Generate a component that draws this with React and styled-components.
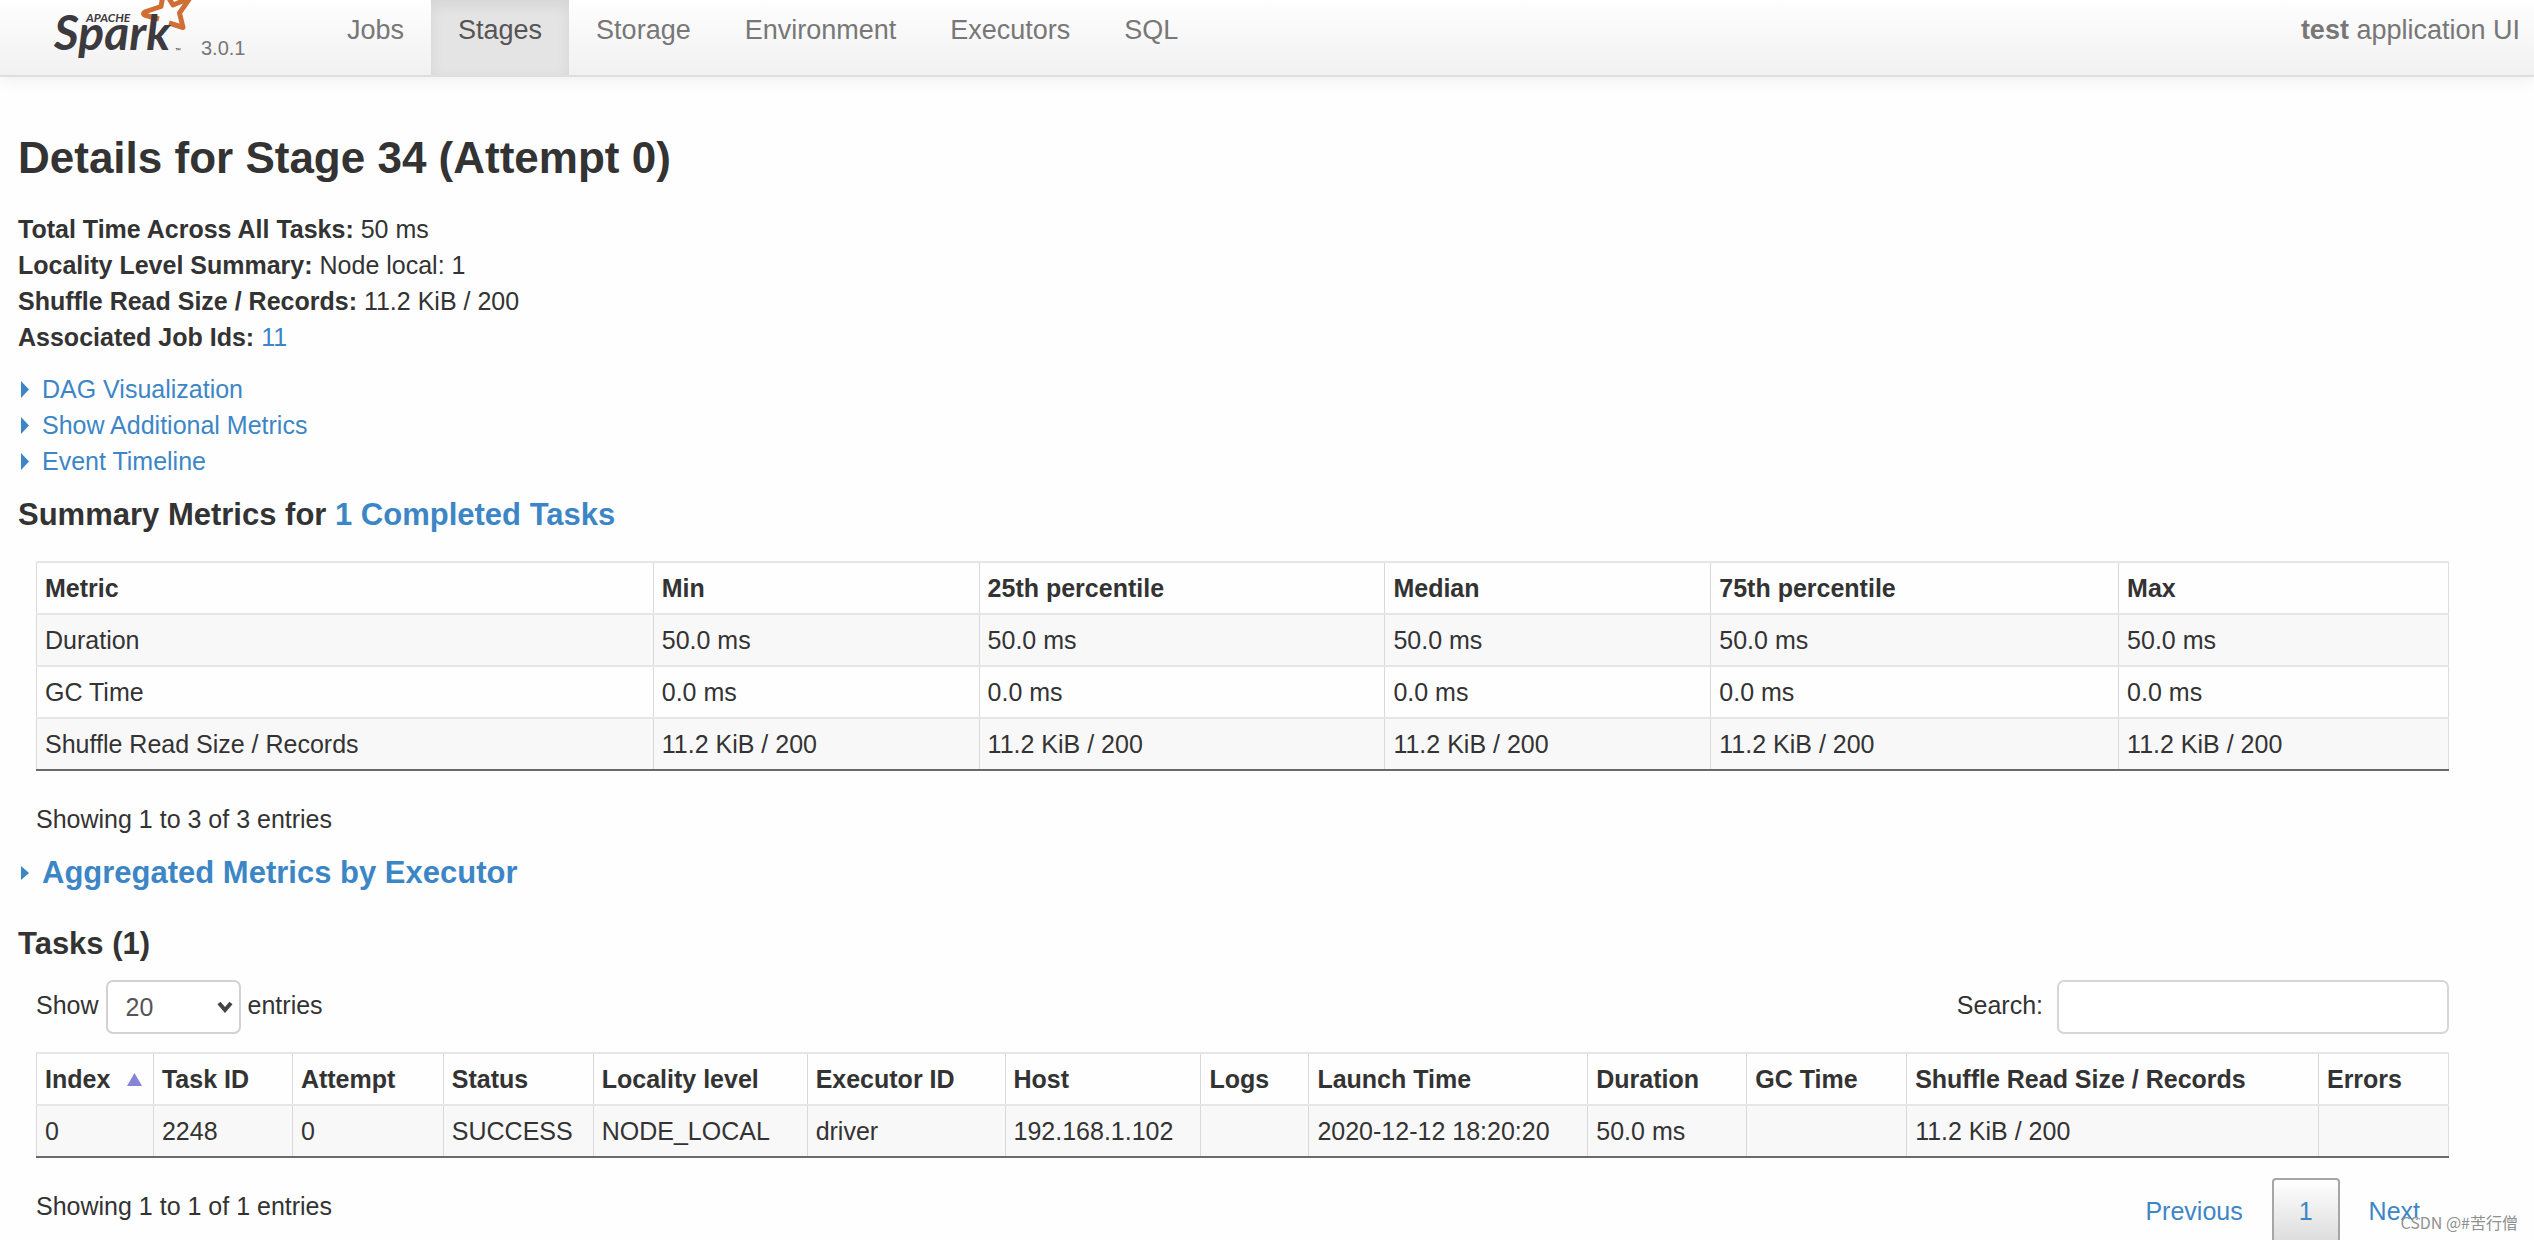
import React, { useState } from "react";
import styled, { createGlobalStyle } from "styled-components";

const GlobalStyle = createGlobalStyle`
    * {
        box-sizing: border-box;
    }

    body {
        margin: 0;
        background: #fefefe;
        color: #333;
        font-family: "Liberation Sans", Arial, sans-serif;
        font-size: 25px;
        line-height: 36px;
    }
`;

const Page = styled.div`
    position: relative;
    height: 100vh;
    overflow: hidden;
`;

/* navbar */

const Navbar = styled.header`
    display: flex;
    height: 77px;
    background: linear-gradient(#fefefe, #f1f1f1);
    border-bottom: 2px solid #dedede;
    box-shadow: 0 2px 18px rgba(0, 0, 0, 0.07);
`;

const Brand = styled.a`
    display: flex;
    align-items: flex-start;
    width: 320px;
    padding-left: 50px;
    color: #777;
    text-decoration: none;
`;

const LogoSvg = styled.svg`
    display: block;
    width: 145px;
    height: 64px;
`;

const Version = styled.span`
    margin: 30px 0 0 6px;
    font-size: 20px;
`;

const Nav = styled.nav`
    display: flex;
    flex: 1;
`;

const NavLink = styled.a`
    padding: 12px 27px;
    font-size: 27px;
    text-decoration: none;
    color: ${(props) => (props.$active ? "#555" : "#777")};
    background: ${(props) => (props.$active ? "#e4e4e4" : "transparent")};
    box-shadow: ${(props) => (props.$active ? "inset 0 5px 14px rgba(0, 0, 0, 0.07)" : "none")};
`;

const AppName = styled.p`
    margin: 0;
    padding: 12px 14px;
    font-size: 27px;
    color: #777;
`;

/* content */

const Content = styled.main`
    padding: 54px 18px 0;
`;

const Title = styled.h3`
    margin: 0 0 26px;
    font-size: 44px;
    line-height: 54px;
`;

const Heading = styled.h4`
    margin: ${(props) => props.$top || 18}px 0 0;
    font-size: 31px;
    line-height: 36px;
`;

const Plain = styled.ul`
    margin: 0 0 16px;
    padding: 0;
    list-style: none;
`;

const Link = styled.a`
    color: #3d86c6;
    text-decoration: none;
`;

const Toggle = styled.button`
    display: flex;
    align-items: center;
    gap: 13px;
    padding: 0 0 0 3px;
    border: 0;
    background: none;
    color: #3d86c6;
    font: inherit;
    cursor: pointer;
`;

const TableArea = styled.section`
    margin: ${(props) => props.$top}px 67px 0 18px;
`;

const Table = styled.table`
    width: 100%;
    table-layout: fixed;
    border-collapse: collapse;
    border: 1px solid #ddd;
    border-top: 2px solid #e4e4e4;
    border-bottom: 2px solid #6a6a6a;

    th,
    td {
        height: 52px;
        padding: 7px 8px;
        border-left: 1px solid #d9d9d9;
        border-top: 2px solid #e6e6e6;
        text-align: left;
        white-space: nowrap;
    }

    tbody tr:nth-child(odd) {
        background: #f8f8f8;
    }
`;

const SortLabel = styled.span`
    display: flex;
    align-items: center;
    justify-content: space-between;
    padding-right: 3px;
`;

const Info = styled.div`
    padding-top: 30px;
`;

const Controls = styled.div`
    display: flex;
    justify-content: space-between;
    margin-bottom: 18px;
`;

/* label text sits a little above the middle of its box */
const Field = styled.label`
    display: flex;
    align-items: flex-start;
    gap: ${(props) => props.$gap}px;
    line-height: 50px;
`;

const SelectWrap = styled.span`
    position: relative;
    display: block;
`;

const Select = styled.select`
    display: block;
    width: 135px;
    height: 54px;
    padding: 0 18px;
    border: 2px solid #d2d2d2;
    border-radius: 7px;
    background: #fff;
    color: #555;
    font: inherit;
    appearance: none;
`;

const Chevron = styled.svg`
    position: absolute;
    right: 8px;
    top: 20px;
    width: 16px;
    height: 13px;
    pointer-events: none;
`;

const SearchInput = styled.input`
    width: 392px;
    height: 54px;
    padding: 0 18px;
    border: 2px solid #d6d6d6;
    border-radius: 7px;
    background: #fff;
    color: #555;
    font: inherit;
`;

const TableFooter = styled.div`
    display: flex;
    justify-content: space-between;
    align-items: flex-start;
`;

const Pagination = styled.div`
    display: flex;
    padding-top: 20px;
`;

const PageButton = styled.button`
    height: 66px;
    padding: 0 ${(props) => (props.$current ? 25 : 27)}px;
    border: 2px solid ${(props) => (props.$current ? "#a6a6a6" : "transparent")};
    border-radius: 4px;
    background: ${(props) => (props.$current ? "linear-gradient(#fff, #dcdcdc)" : "none")};
    color: #3d86c6;
    font: inherit;
    cursor: pointer;
`;

const Watermark = styled.div`
    position: absolute;
    right: 16px;
    bottom: 0;
    color: #909090;
    font-family: "Noto Sans CJK SC", sans-serif;
    font-size: 16px;
    line-height: 36px;
    text-shadow: 1px 1px 0 #fff;
`;

const tabs = ["Jobs", "Stages", "Storage", "Environment", "Executors", "SQL"];

const details = [
    { label: "Total Time Across All Tasks:", value: "50 ms" },
    { label: "Locality Level Summary:", value: "Node local: 1" },
    { label: "Shuffle Read Size / Records:", value: "11.2 KiB / 200" },
    { label: "Associated Job Ids:", value: <Link href="#job-11">11</Link> },
];

const toggles = ["DAG Visualization", "Show Additional Metrics", "Event Timeline"];

// weight = share of the table width
const summaryColumns = [
    { name: "Metric", weight: 617 },
    { name: "Min", weight: 326 },
    { name: "25th percentile", weight: 406 },
    { name: "Median", weight: 326 },
    { name: "75th percentile", weight: 408 },
    { name: "Max", weight: 330 },
];

const summaryRows = [
    ["Duration", ...Array(5).fill("50.0 ms")],
    ["GC Time", ...Array(5).fill("0.0 ms")],
    ["Shuffle Read Size / Records", ...Array(5).fill("11.2 KiB / 200")],
];

const taskColumns = [
    { name: "Index", weight: 117, sorted: true },
    { name: "Task ID", weight: 139 },
    { name: "Attempt", weight: 151 },
    { name: "Status", weight: 150 },
    { name: "Locality level", weight: 214 },
    { name: "Executor ID", weight: 198 },
    { name: "Host", weight: 196 },
    { name: "Logs", weight: 108 },
    { name: "Launch Time", weight: 279 },
    { name: "Duration", weight: 159 },
    { name: "GC Time", weight: 160 },
    { name: "Shuffle Read Size / Records", weight: 412 },
    { name: "Errors", weight: 130 },
];

const taskRows = [
    ["0", "2248", "0", "SUCCESS", "NODE_LOCAL", "driver", "192.168.1.102", "",
        "2020-12-12 18:20:20", "50.0 ms", "", "11.2 KiB / 200", ""],
];

function SparkLogo() {
    return (
        <LogoSvg viewBox="50 0 145 64" role="img" aria-label="Apache Spark">
            <g fill="none" stroke="#cf6f36" strokeWidth="5" strokeLinejoin="round">
                <path d="M159 19 L146 15.5 Q141 14 146 11.5 L161 6.5 L163 -5" />
                <path d="M167 -5 L173 5 L190 -2 L179.5 13 L183 27.5 L169 23" />
            </g>
            <g fill="#3c3a3e" fontFamily="Lato, sans-serif" fontStyle="italic">
                <text x="86" y="22" fontSize="12" fontWeight="700">APACHE</text>
                <text x="54" y="50" fontSize="48" fontWeight="700">Spark</text>
                <text x="175" y="54" fontSize="8">™</text>
            </g>
        </LogoSvg>
    );
}

function Arrow({ small }) {
    return (
        <svg width="8" height={small ? 14 : 17} viewBox="0 0 8 17" preserveAspectRatio="none">
            <path d="M0 0 L8 8.5 L0 17 Z" fill="#3d86c6" />
        </svg>
    );
}

function DataTable({ columns, rows }) {
    const total = columns.reduce((sum, column) => sum + column.weight, 0);

    return (
        <Table>
            <colgroup>
                {columns.map(({ name, weight }) => (
                    <col key={name} style={{ width: `${(weight / total) * 100}%` }} />
                ))}
            </colgroup>
            <thead>
                <tr>
                    {columns.map(({ name, sorted }) => (
                        <th key={name} scope="col">
                            {sorted ? (
                                <SortLabel>
                                    {name}
                                    <svg width="15" height="13" viewBox="0 0 15 13">
                                        <path d="M7.5 0 L15 13 L0 13 Z" fill="#8584d6" />
                                    </svg>
                                </SortLabel>
                            ) : name}
                        </th>
                    ))}
                </tr>
            </thead>
            <tbody>
                {rows.map((row) => (
                    <tr key={row[0]}>
                        {row.map((cell, i) => <td key={columns[i].name}>{cell}</td>)}
                    </tr>
                ))}
            </tbody>
        </Table>
    );
}

function App() {
    const [pageSize, setPageSize] = useState("20");
    const [search, setSearch] = useState("");

    return (
        <Page>
            <GlobalStyle />
            <Navbar>
                <Brand href="#home">
                    <SparkLogo />
                    <Version>3.0.1</Version>
                </Brand>
                <Nav>
                    {tabs.map((tab) => (
                        <NavLink key={tab} href={`#${tab}`} $active={tab === "Stages"}>{tab}</NavLink>
                    ))}
                </Nav>
                <AppName><b>test</b> application UI</AppName>
            </Navbar>

            <Content>
                <Title>Details for Stage 34 (Attempt 0)</Title>
                <Plain>
                    {details.map(({ label, value }) => (
                        <li key={label}><b>{label}</b> {value}</li>
                    ))}
                </Plain>
                {toggles.map((text) => (
                    <Toggle key={text} type="button"><Arrow />{text}</Toggle>
                ))}

                <Heading>
                    Summary Metrics for <Link href="#tasks">1 Completed Tasks</Link>
                </Heading>
                <TableArea $top={28}>
                    <DataTable columns={summaryColumns} rows={summaryRows} />
                    <Info>Showing 1 to 3 of 3 entries</Info>
                </TableArea>

                <Heading>
                    <Toggle type="button"><Arrow small />Aggregated Metrics by Executor</Toggle>
                </Heading>

                <Heading id="tasks" $top={35}>Tasks (1)</Heading>
                <TableArea $top={18}>
                    <Controls>
                        <Field $gap={7}>
                            Show
                            <SelectWrap>
                                <Select value={pageSize} onChange={(e) => setPageSize(e.target.value)}>
                                    <option>20</option>
                                    <option>40</option>
                                    <option>60</option>
                                    <option>100</option>
                                </Select>
                                <Chevron viewBox="0 0 16 13">
                                    <path d="M2 3 L8 10 L14 3" fill="none" stroke="#444" strokeWidth="4" />
                                </Chevron>
                            </SelectWrap>
                            entries
                        </Field>
                        <Field $gap={14}>
                            Search:
                            <SearchInput type="search" value={search} onChange={(e) => setSearch(e.target.value)} />
                        </Field>
                    </Controls>
                    <DataTable columns={taskColumns} rows={taskRows} />
                    <TableFooter>
                        <Info>Showing 1 to 1 of 1 entries</Info>
                        <Pagination>
                            <PageButton type="button">Previous</PageButton>
                            <PageButton type="button" $current>1</PageButton>
                            <PageButton type="button">Next</PageButton>
                        </Pagination>
                    </TableFooter>
                </TableArea>
            </Content>
            <Watermark>CSDN @#苦行僧</Watermark>
        </Page>
    );
}

export default App;
